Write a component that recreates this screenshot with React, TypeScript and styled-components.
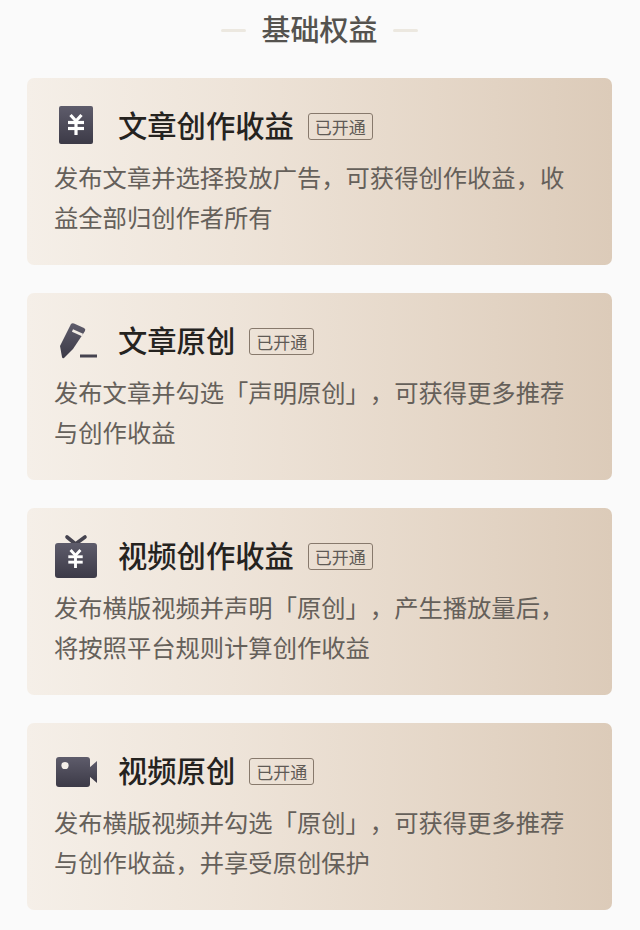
import styled, { createGlobalStyle } from "styled-components";

const GlobalStyle = createGlobalStyle`
  html, body {
    margin: 0;
    padding: 0;
    background: #fafafa;
  }
`;

const Page = styled.div`
  width: 640px;
  height: 930px;
  overflow: hidden;
  box-sizing: border-box;
  padding: 10px 28px 0 27px;
  background: #fafafa;
  font-family: "Noto Sans CJK SC", "Noto Sans", sans-serif;
`;

const Heading = styled.div`
  display: flex;
  align-items: center;
  justify-content: center;
  gap: 15px;
  height: 40px;
  margin-bottom: 28px;
`;

const HeadingText = styled.span`
  margin-bottom: 3px;
  color: #55534f;
  font-size: 29px;
  font-weight: 500;
  line-height: 37px;
`;

const HeadingDash = styled.span`
  width: 25px;
  height: 3px;
  border-radius: 2px;
  background: #ece8e0;
`;

const CardList = styled.div`
  display: flex;
  flex-direction: column;
  gap: 28px;
`;

const Card = styled.div`
  height: 187px;
  box-sizing: border-box;
  padding: 27px 28px 0 27px;
  border-radius: 7px;
  background: linear-gradient(90deg, #f5efe8 0%, #eee4d9 35%, #e5d7c8 70%, #dccbb9 100%);
`;

const CardHead = styled.div`
  display: flex;
  align-items: center;
  height: 42px;
  margin-bottom: 10px;
`;

const IconSlot = styled.div`
  width: 44px;
  height: 42px;
  margin-left: 1px;
  margin-right: 19px;
  display: flex;
  align-items: center;
  justify-content: center;
`;

const CardTitle = styled.div`
  margin-bottom: 4px;
  color: #25231f;
  font-size: 29.3px;
  font-weight: 500;
  line-height: 38px;
  white-space: nowrap;
`;

const Tag = styled.span`
  margin-left: 14px;
  width: 65px;
  height: 27px;
  box-sizing: border-box;
  display: flex;
  align-items: center;
  justify-content: center;
  border: 1px solid #87796c;
  border-radius: 3px;
  color: #5f5a55;
  font-size: 17px;
  font-weight: 400;
`;

const CardText = styled.p`
  margin: 0;
  color: #65605a;
  font-size: 24.3px;
  line-height: 40px;
  white-space: nowrap;
  text-spacing-trim: space-all;
`;

const Gradient = ({ id }: { id: string }) => (
  <defs>
    <linearGradient id={id} x1="0" y1="0" x2="0" y2="1">
      <stop offset="0" stopColor="#5e5c6b" />
      <stop offset="1" stopColor="#3c3a47" />
    </linearGradient>
  </defs>
);

const YenStrokes = ({ x, y, s }: { x: number; y: number; s: number }) => (
  <g
    transform={`translate(${x} ${y}) scale(${s})`}
    fill="none"
    stroke="#fff"
    strokeWidth="3.2"
  >
    <path d="M-5.5 -10 L0 -4 L5.5 -10" />
    <path d="M-8 -2.5 H8" />
    <path d="M-8 3.5 H8" />
    <path d="M0 -4 V10" />
  </g>
);

const MoneyIcon = () => (
  <svg width="44" height="42" viewBox="0 0 44 42">
    <Gradient id="g-money" />
    <rect x="4" y="1" width="34" height="38" rx="2" fill="url(#g-money)" />
    <YenStrokes x={21} y={20} s={1} />
  </svg>
);

const PenIcon = () => (
  <svg width="44" height="42" viewBox="0 0 44 42">
    <Gradient id="g-pen" />
    <path
      d="M16 4 Q17 3 19 3.5 L29 8 Q31 9 30 11 L18 29 L9 38 Q7.5 39 7 37 L5 26 Z"
      fill="url(#g-pen)"
    />
    <path d="M17.5 10.5 L27.5 15" stroke="#f2ece5" strokeWidth="2.6" />
    <path d="M25 36 H42" stroke="#45434f" strokeWidth="3" />
  </svg>
);

const TvIcon = () => (
  <svg width="44" height="46" viewBox="0 0 44 46">
    <Gradient id="g-tv" />
    <path
      d="M12 4 L20.5 11 L30 4"
      fill="none"
      stroke="#45434f"
      strokeWidth="3.6"
      strokeLinecap="round"
      strokeLinejoin="round"
    />
    <rect x="0" y="10" width="42" height="35" rx="3" fill="url(#g-tv)" />
    <YenStrokes x={20.5} y={26} s={0.9} />
  </svg>
);

const CameraIcon = () => (
  <svg width="44" height="42" viewBox="0 0 44 42">
    <Gradient id="g-cam" />
    <rect x="1" y="7" width="34" height="30" rx="3" fill="url(#g-cam)" />
    <path d="M34 18 L42 11 V33 L34 26 Z" fill="url(#g-cam)" />
    <circle cx="10" cy="15.5" r="3.6" fill="#f4efe9" />
  </svg>
);

const cards = [
  {
    icon: <MoneyIcon />,
    title: "文章创作收益",
    lines: ["发布文章并选择投放广告\uFF0C可获得创作收益\uFF0C收", "益全部归创作者所有"],
  },
  {
    icon: <PenIcon />,
    title: "文章原创",
    lines: ["发布文章并勾选「声明原创」\uFF0C可获得更多推荐", "与创作收益"],
  },
  {
    icon: <TvIcon />,
    title: "视频创作收益",
    lines: ["发布横版视频并声明「原创」\uFF0C产生播放量后\uFF0C", "将按照平台规则计算创作收益"],
  },
  {
    icon: <CameraIcon />,
    title: "视频原创",
    lines: ["发布横版视频并勾选「原创」\uFF0C可获得更多推荐", "与创作收益\uFF0C并享受原创保护"],
  },
];

export default function App() {
  return (
    <Page>
      <GlobalStyle />
      <Heading>
        <HeadingDash />
        <HeadingText>基础权益</HeadingText>
        <HeadingDash />
      </Heading>
      <CardList>
        {cards.map((card) => (
          <Card key={card.title}>
            <CardHead>
              <IconSlot>{card.icon}</IconSlot>
              <CardTitle>{card.title}</CardTitle>
              <Tag>已开通</Tag>
            </CardHead>
            {card.lines.map((line) => (
              <CardText key={line}>{line}</CardText>
            ))}
          </Card>
        ))}
      </CardList>
    </Page>
  );
}
